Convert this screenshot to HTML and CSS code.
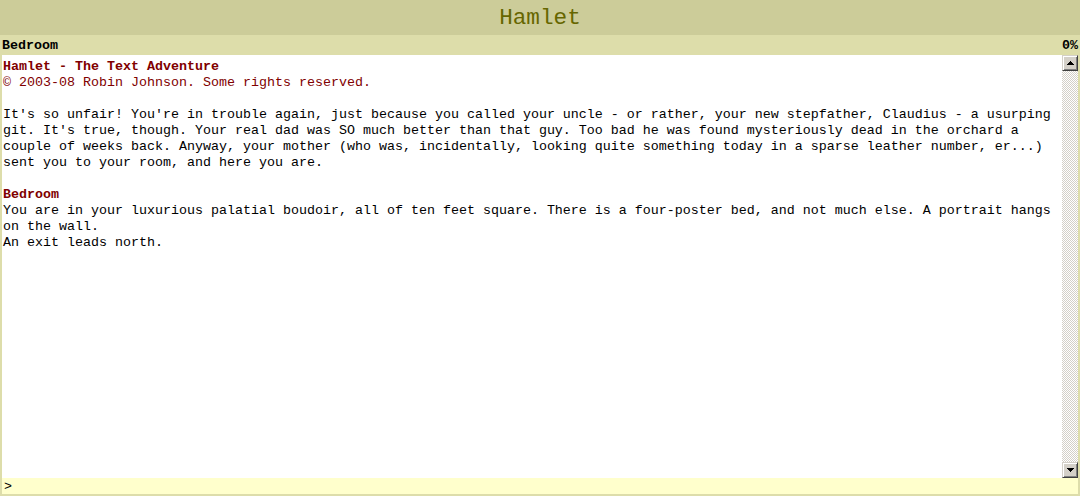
FILE: index.html
```html
<!DOCTYPE html>
<html lang="en">
<head>
    <meta charset="UTF-8">
    <title>Hamlet</title>
    <link rel="stylesheet" href="styles.css">
</head>
<body>
    <div class="header">Hamlet</div>

    <div class="status">
        <span class="location">Bedroom</span>
        <span class="score">0%</span>
    </div>

    <div class="frame">
        <div id="output" class="output">
            <p><span class="title">Hamlet - The Text Adventure</span><br>
            <span class="credit">&copy; 2003-08 Robin Johnson. Some rights reserved.</span></p>

            <p>It's so unfair! You're in trouble again, just because you called your uncle - or rather, your new stepfather, Claudius - a usurping git. It's true, though. Your real dad was SO much better than that guy. Too bad he was found mysteriously dead in the orchard a couple of weeks back. Anyway, your mother (who was, incidentally, looking quite something today in a sparse leather number, er...) sent you to your room, and here you are.</p>

            <p><span class="title">Bedroom</span><br>
            You are in your luxurious palatial boudoir, all of ten feet square. There is a four-poster bed, and not much else. A portrait hangs on the wall.<br>
            An exit leads north.</p>
        </div>

        <div class="scrollbar">
            <div class="arrow">
                <svg width="7" height="4" viewBox="0 0 7 4"><path d="M3 0h1v1h1v1h1v1h1v1H0V3h1V2h1V1h1z" fill="#000"/></svg>
            </div>
            <div class="track"></div>
            <div class="arrow">
                <svg width="7" height="4" viewBox="0 0 7 4"><path d="M0 0h7v1H6v1H5v1H4v1H3V3H2V2H1V1H0z" fill="#000"/></svg>
            </div>
        </div>
    </div>

    <div class="prompt">
        <span>&gt;</span>
        <input type="text" id="command" autocomplete="off">
    </div>
</body>
</html>
```

FILE: styles.css
```css
* {
    box-sizing: border-box;
    margin: 0;
    padding: 0;
}

html, body {
    height: 100%;
    overflow: hidden;
}

body {
    font-family: "Liberation Mono", "Courier New", monospace;
    font-size: 13.33px;
    line-height: 16px;
    color: #000;
    background: #ffffff;
    display: flex;
    flex-direction: column;
}

.header {
    height: 35px;
    flex: none;
    background: #cccc99;
    color: #666600;
    font-size: 22.7px;
    line-height: 36px;
    text-align: center;
}

.status {
    height: 20px;
    flex: none;
    background: #ddddaa;
    display: flex;
    justify-content: space-between;
    align-items: center;
    padding: 2px 2px 0 2px;
    font-weight: bold;
}

.frame {
    flex: 1;
    min-height: 0;
    display: flex;
    border-left: 2px solid #ddddaa;
    border-right: 2px solid #ddddaa;
}

.output {
    flex: 1;
    overflow: hidden;
    padding: 4px 1px 0 1px;
}

.output p {
    margin-bottom: 16px;
}

.title {
    color: #800000;
    font-weight: bold;
}

.credit {
    color: #800000;
}

.scrollbar {
    width: 16px;
    flex: none;
    display: flex;
    flex-direction: column;
}

.track {
    flex: 1;
    background: repeating-conic-gradient(#d4d0c8 0 25%, #ffffff 0 50%) 0 0 / 2px 2px;
}

.arrow {
    height: 16px;
    background: #d4d0c8;
    border-top: 1px solid #d4d0c8;
    border-left: 1px solid #d4d0c8;
    border-right: 1px solid #404040;
    border-bottom: 1px solid #404040;
    box-shadow: inset 1px 1px 0 #ffffff, inset -1px -1px 0 #808080;
    display: flex;
    align-items: center;
    justify-content: center;
}

.arrow svg {
    display: block;
}

.prompt {
    height: 18px;
    flex: none;
    background: #ffffcc;
    border-bottom: 2px solid #ddddaa;
    border-left: 2px solid #ddddaa;
    border-right: 2px solid #ddddaa;
    display: flex;
    align-items: flex-end;
    padding-left: 2px;
}

.prompt span {
    line-height: 14px;
}

.prompt input {
    flex: 1;
    height: 16px;
    border: none;
    outline: none;
    background: transparent;
    font: inherit;
    padding-left: 8px;
}
```
